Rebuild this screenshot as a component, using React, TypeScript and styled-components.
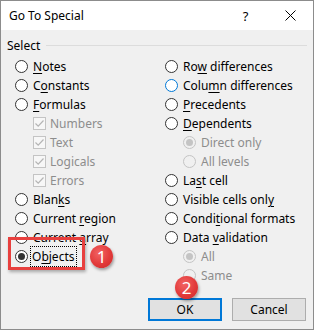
import styled, { createGlobalStyle } from 'styled-components'

const GlobalStyle = createGlobalStyle`
  html, body {
    margin: 0;
    padding: 0;
    background: #ffffff;
  }
  body {
    font-family: "Noto Sans", "Liberation Sans", sans-serif;
    font-size: 12px;
    color: #000;
  }
`

const Dialog = styled.div`
  width: 314px;
  height: 330px;
  box-sizing: border-box;
  border: 1px solid #8c8c8c;
  background: #f0f0f0;
  display: flex;
  flex-direction: column;
  overflow: hidden;
`

const TitleBar = styled.div`
  height: 29px;
  flex: none;
  background: #ffffff;
  display: flex;
  align-items: center;
  padding-left: 8px;
`

const Title = styled.div`
  flex: 1;
  font-size: 12px;
  padding-bottom: 1px;
`

const TitleButton = styled.div`
  width: 45px;
  height: 29px;
  display: flex;
  align-items: center;
  justify-content: center;
  font-size: 13px;
`

const Body = styled.div`
  flex: 1;
  display: flex;
  flex-direction: column;
  padding: 7px 6px 8px 6px;
`

const GroupHeader = styled.div`
  height: 16px;
  display: flex;
  align-items: center;
  gap: 6px;
`

const GroupLine = styled.div`
  flex: 1;
  height: 1px;
  background: #dcdcdc;
`

const Columns = styled.div`
  display: grid;
  grid-template-columns: 150px 1fr;
  margin-top: 4px;
  padding-left: 8px;
`

const Column = styled.div`
  display: flex;
  flex-direction: column;
`

const Row = styled.div<{ $indent?: boolean; $disabled?: boolean }>`
  position: relative;
  height: 19px;
  display: flex;
  align-items: center;
  padding-left: ${p => (p.$indent ? '18px' : '0')};
  color: ${p => (p.$disabled ? '#8d8d8d' : '#000')};
  white-space: nowrap;
`

const Radio = styled.span<{ $checked?: boolean; $disabled?: boolean; $hover?: boolean }>`
  width: 13px;
  height: 13px;
  box-sizing: border-box;
  border-radius: 50%;
  border: 1px solid ${p => (p.$disabled ? '#c4c4c4' : p.$hover ? '#0078d7' : '#333333')};
  background: ${p => (p.$disabled ? '#f0f0f0' : '#ffffff')};
  display: flex;
  align-items: center;
  justify-content: center;
  margin-right: 5px;
  flex: none;

  &::after {
    content: '';
    width: 7px;
    height: 7px;
    border-radius: 50%;
    background: ${p => (p.$disabled ? '#c4c4c4' : '#333333')};
    display: ${p => (p.$checked ? 'block' : 'none')};
  }
`

const CheckBox = styled.span`
  width: 13px;
  height: 13px;
  box-sizing: border-box;
  border: 1px solid #c4c4c4;
  background: #f7f7f7;
  margin-right: 4px;
  flex: none;
  display: flex;
  align-items: center;
  justify-content: center;
`

const Key = styled.u`
  text-underline-offset: 2px;
`

const FocusLabel = styled.span`
  outline: 1px dotted #000;
  outline-offset: 0;
  padding: 1px 2px 1px 1px;
  margin-left: -2px;
`

const Highlight = styled.span`
  position: absolute;
  left: -7px;
  top: -10px;
  width: 77px;
  height: 33px;
  box-sizing: border-box;
  border: 3px solid #e8403e;
  box-shadow: 1px 2px 3px rgba(0, 0, 0, 0.3);
  pointer-events: none;
`

const Badge = styled.span<{ $left: number; $top: number }>`
  position: absolute;
  left: ${p => p.$left}px;
  top: ${p => p.$top}px;
  width: 23px;
  height: 23px;
  border-radius: 50%;
  background: radial-gradient(circle at 40% 35%, #f26464 0%, #e23a3a 55%, #c92a2a 100%);
  box-shadow: 1px 2px 3px rgba(0, 0, 0, 0.35);
  color: #ffffff;
  font-size: 17px;
  line-height: 23px;
  text-align: center;
  z-index: 2;
`

const ButtonRow = styled.div`
  margin-top: auto;
  display: flex;
  justify-content: flex-end;
  gap: 10px;
  padding-right: 1px;
`

const ButtonWrap = styled.div`
  position: relative;
`

const Button = styled.button<{ $primary?: boolean }>`
  width: 74px;
  height: 23px;
  box-sizing: border-box;
  background: #e1e1e1;
  border: ${p => (p.$primary ? '2px solid #0078d7' : '1px solid #adadad')};
  font-family: inherit;
  font-size: 12px;
  color: #000;
  padding: 0;
`

type Item =
  | { kind: 'radio'; label: string; key?: number; checked?: boolean; disabled?: boolean; hover?: boolean; indent?: boolean }
  | { kind: 'check'; label: string }

const leftItems: Item[] = [
  { kind: 'radio', label: 'Notes', key: 0 },
  { kind: 'radio', label: 'Constants', key: 1 },
  { kind: 'radio', label: 'Formulas', key: 0 },
  { kind: 'check', label: 'Numbers' },
  { kind: 'check', label: 'Text' },
  { kind: 'check', label: 'Logicals' },
  { kind: 'check', label: 'Errors' },
  { kind: 'radio', label: 'Blanks', key: 4 },
  { kind: 'radio', label: 'Current region', key: 8 },
  { kind: 'radio', label: 'Current array', key: 8 },
]

const rightItems: Item[] = [
  { kind: 'radio', label: 'Row differences', key: 2 },
  { kind: 'radio', label: 'Column differences', key: 4, hover: true },
  { kind: 'radio', label: 'Precedents', key: 0 },
  { kind: 'radio', label: 'Dependents', key: 0 },
  { kind: 'radio', label: 'Direct only', indent: true, disabled: true, checked: true },
  { kind: 'radio', label: 'All levels', indent: true, disabled: true },
  { kind: 'radio', label: 'Last cell', key: 2 },
  { kind: 'radio', label: 'Visible cells only', key: 17 },
  { kind: 'radio', label: 'Conditional formats', key: 5 },
  { kind: 'radio', label: 'Data validation', key: 5 },
  { kind: 'radio', label: 'All', indent: true, disabled: true, checked: true },
  { kind: 'radio', label: 'Same', indent: true, disabled: true },
]

function Label({ text, k }: { text: string; k?: number }) {
  if (k === undefined) return <span>{text}</span>
  return (
    <span>
      {text.slice(0, k)}
      <Key>{text[k]}</Key>
      {text.slice(k + 1)}
    </span>
  )
}

function CheckMark() {
  return (
    <svg width="11" height="11" viewBox="0 0 11 11">
      <path d="M1.5 5.5 L4.2 8.2 L9.5 2.5" fill="none" stroke="#b5b5b5" strokeWidth="1.2" />
    </svg>
  )
}

function ItemRow({ item }: { item: Item }) {
  if (item.kind === 'check') {
    return (
      <Row $indent $disabled>
        <CheckBox>
          <CheckMark />
        </CheckBox>
        {item.label}
      </Row>
    )
  }
  return (
    <Row $indent={item.indent} $disabled={item.disabled}>
      <Radio $checked={item.checked} $disabled={item.disabled} $hover={item.hover} />
      <Label text={item.label} k={item.key} />
    </Row>
  )
}

export default function App() {
  return (
    <>
      <GlobalStyle />
      <Dialog>
        <TitleBar>
          <Title>Go To Special</Title>
          <TitleButton>?</TitleButton>
          <TitleButton>
            <svg width="11" height="11" viewBox="0 0 11 11">
              <path d="M0.5 0.5 L10.5 10.5 M10.5 0.5 L0.5 10.5" stroke="#000" strokeWidth="1" />
            </svg>
          </TitleButton>
        </TitleBar>
        <Body>
          <GroupHeader>
            <span>Select</span>
            <GroupLine />
          </GroupHeader>
          <Columns>
            <Column>
              {leftItems.map(item => (
                <ItemRow key={item.label} item={item} />
              ))}
              <Row>
                <Highlight />
                <Radio $checked />
                <FocusLabel>
                  <Label text="Objects" k={1} />
                </FocusLabel>
                <Badge $left={75} $top={-2}>1</Badge>
              </Row>
            </Column>
            <Column>
              {rightItems.map(item => (
                <ItemRow key={item.label} item={item} />
              ))}
            </Column>
          </Columns>
          <ButtonRow>
            <ButtonWrap>
              <Button $primary>OK</Button>
              <Badge $left={27} $top={-22}>2</Badge>
            </ButtonWrap>
            <Button>Cancel</Button>
          </ButtonRow>
        </Body>
      </Dialog>
    </>
  )
}
